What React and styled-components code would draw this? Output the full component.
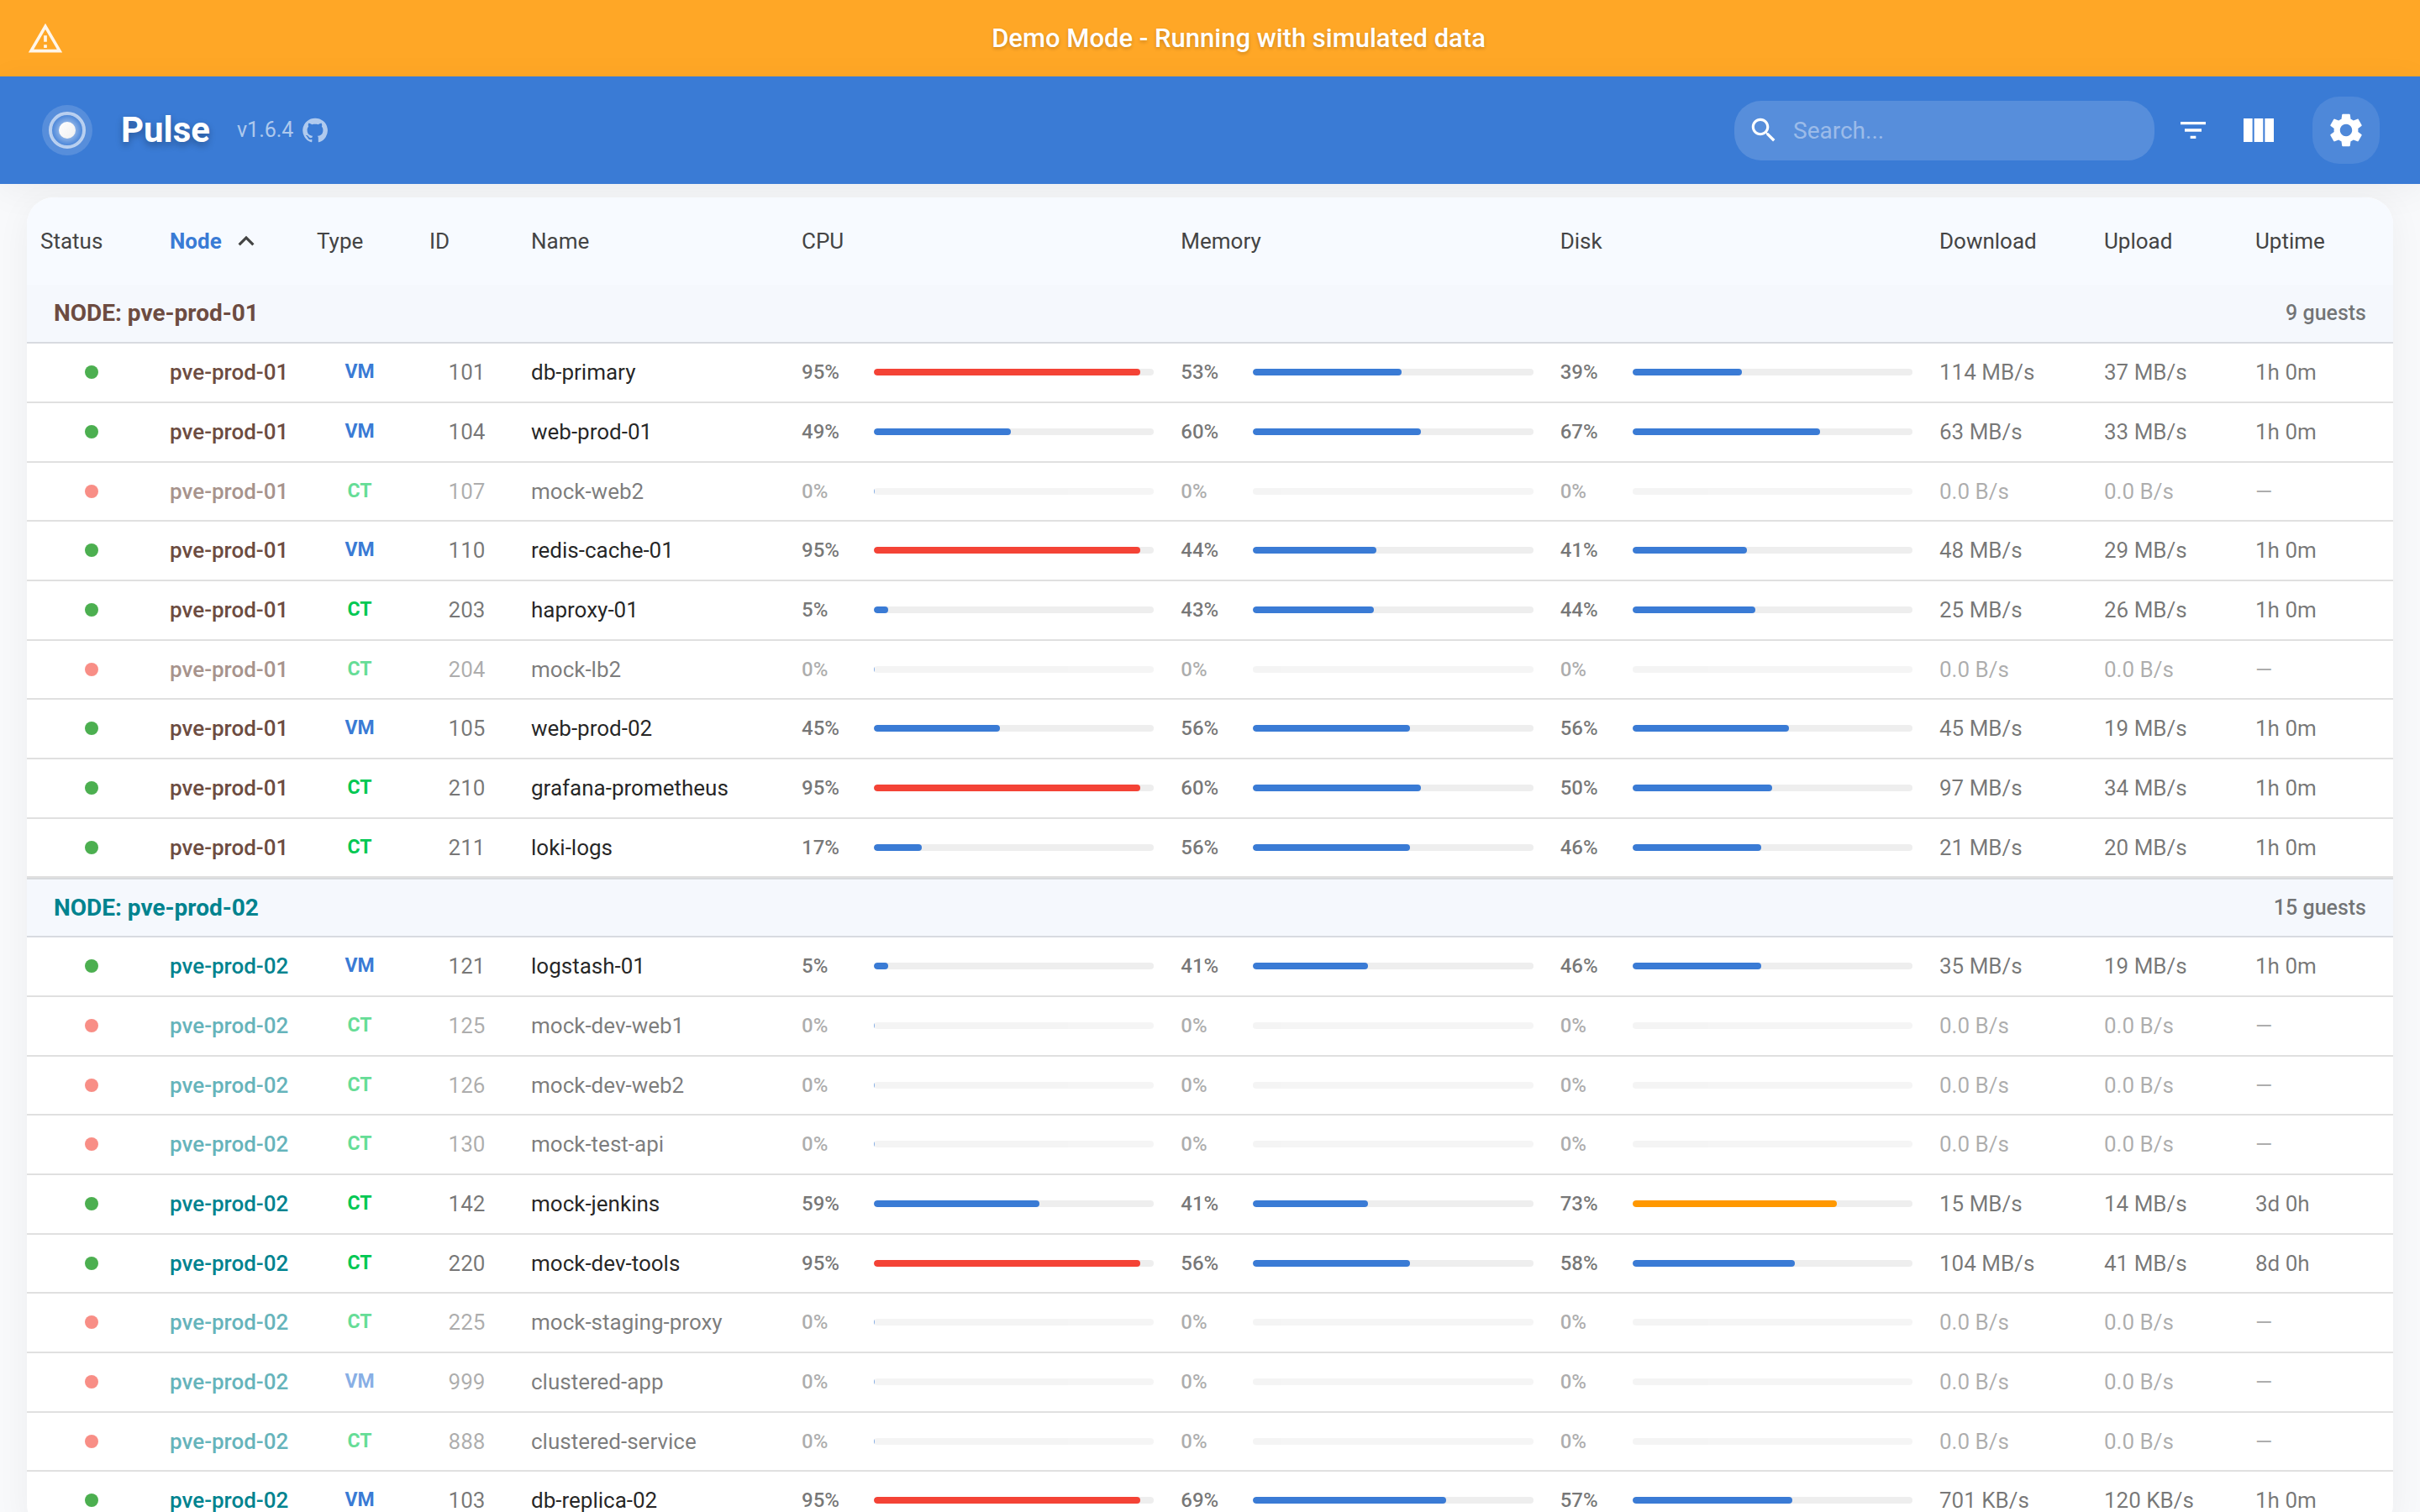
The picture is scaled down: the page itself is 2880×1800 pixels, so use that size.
import React, { useState } from "react";
import styled, { createGlobalStyle } from "styled-components";

const BLUE = "#3a7bd5";
const RED = "#f44336";
const ORANGE = "#ff9800";

const nodeColors = {
  "pve-prod-01": "#6d4c41",
  "pve-prod-02": "#00838f",
};

const columns = [
  { label: "Status", width: 154 },
  { label: "Node", width: 175, sorted: true },
  { label: "Type", width: 134 },
  { label: "ID", width: 121 },
  { label: "Name", width: 322 },
  { label: "CPU" },
  { label: "Memory" },
  { label: "Disk" },
  { label: "Download", width: 196 },
  { label: "Upload", width: 180 },
  { label: "Uptime", width: 180 },
];

const off = (type, id, name) => ({
  type, id, name, offline: true,
  cpu: 0, mem: 0, disk: 0, down: "0.0 B/s", up: "0.0 B/s", uptime: "—",
});
const on = (type, id, name, cpu, mem, disk, down, up, uptime = "1h 0m") => ({
  type, id, name, cpu, mem, disk, down, up, uptime,
});

const groups = [
  {
    node: "pve-prod-01",
    total: 9,
    guests: [
      on("VM", 101, "db-primary", 95, 53, 39, "114 MB/s", "37 MB/s"),
      on("VM", 104, "web-prod-01", 49, 60, 67, "63 MB/s", "33 MB/s"),
      off("CT", 107, "mock-web2"),
      on("VM", 110, "redis-cache-01", 95, 44, 41, "48 MB/s", "29 MB/s"),
      on("CT", 203, "haproxy-01", 5, 43, 44, "25 MB/s", "26 MB/s"),
      off("CT", 204, "mock-lb2"),
      on("VM", 105, "web-prod-02", 45, 56, 56, "45 MB/s", "19 MB/s"),
      on("CT", 210, "grafana-prometheus", 95, 60, 50, "97 MB/s", "34 MB/s"),
      on("CT", 211, "loki-logs", 17, 56, 46, "21 MB/s", "20 MB/s"),
    ],
  },
  {
    node: "pve-prod-02",
    total: 15,
    guests: [
      on("VM", 121, "logstash-01", 5, 41, 46, "35 MB/s", "19 MB/s"),
      off("CT", 125, "mock-dev-web1"),
      off("CT", 126, "mock-dev-web2"),
      off("CT", 130, "mock-test-api"),
      on("CT", 142, "mock-jenkins", 59, 41, 73, "15 MB/s", "14 MB/s", "3d 0h"),
      on("CT", 220, "mock-dev-tools", 95, 56, 58, "104 MB/s", "41 MB/s", "8d 0h"),
      off("CT", 225, "mock-staging-proxy"),
      off("VM", 999, "clustered-app"),
      off("CT", 888, "clustered-service"),
      on("VM", 103, "db-replica-02", 95, 69, 57, "701 KB/s", "120 KB/s"),
    ],
  },
];

const Global = createGlobalStyle`
  * { box-sizing: border-box; }
  html, body, #root { height: 100%; }
  body {
    margin: 0;
    background: #f8f9fb;
    color: rgba(0, 0, 0, 0.87);
    font-family: Roboto, "Liberation Sans", sans-serif;
    font-size: 26px;
    line-height: 28px;
  }
  button, input { font: inherit; color: inherit; }
`;

const Page = styled.div`
  height: 100%;
  display: flex;
  flex-direction: column;
`;

const Banner = styled.div`
  flex: none;
  display: flex;
  align-items: center;
  gap: 24px;
  padding: 24px 32px 23px;
  background: #ffa726;
  color: #fff;
`;

const BannerText = styled.p`
  flex: 1;
  margin: 0;
  text-align: center;
  font-size: 31px;
  font-weight: 500;
  line-height: 44px;
  text-shadow: 0 2px 4px rgba(0, 0, 0, 0.2);
`;

const TopBar = styled.header`
  position: relative;
  flex: none;
  display: flex;
  align-items: center;
  justify-content: space-between;
  padding: 24px 48px;
  background: ${BLUE};
  color: #fff;
  box-shadow: 0 8px 40px rgba(0, 0, 0, 0.05);
`;

const Brand = styled.div`
  display: flex;
  align-items: center;
  gap: 32px;
`;

const Title = styled.h1`
  margin: 0;
  font-size: 42px;
  font-weight: 700;
  line-height: 56px;
  text-shadow: 0 4px 8px rgba(0, 0, 0, 0.3);
`;

const VersionLink = styled.a`
  display: flex;
  align-items: center;
  gap: 10px;
  color: rgba(255, 255, 255, 0.6);
  font-size: 25px;
  text-decoration: none;
`;

const Tools = styled.div`
  display: flex;
  align-items: center;
  gap: 16px;
`;

const SearchBox = styled.label`
  display: flex;
  align-items: center;
  gap: 16px;
  width: 500px;
  height: 71px;
  padding: 0 16px;
  border-radius: 32px;
  background: rgba(255, 255, 255, 0.15);
`;

const SearchInput = styled.input`
  flex: 1;
  min-width: 0;
  height: 48px;
  padding: 0;
  border: 0;
  outline: 0;
  background: none;
  font-size: 28px;
  &::placeholder { color: rgba(255, 255, 255, 0.42); opacity: 1; }
`;

const IconButton = styled.button`
  display: grid;
  place-items: center;
  width: ${(p) => p.$size}px;
  height: ${(p) => p.$size}px;
  margin: 0;
  margin-left: ${(p) => (p.$filled ? 16 : 0)}px;
  padding: 0;
  border: 0;
  border-radius: 32px;
  background: ${(p) => (p.$filled ? "rgba(255, 255, 255, 0.1)" : "none")};
  color: #fff;
  cursor: pointer;
`;

const Svg = styled.svg`
  display: block;
  flex: none;
  width: ${(p) => p.$size}px;
  height: ${(p) => p.$size}px;
  fill: currentColor;
  opacity: ${(p) => p.$opacity ?? 1};
`;

const Content = styled.main`
  position: relative;
  z-index: 1;
  flex: 1;
  min-height: 0;
  padding: 16px 32px 0;
  overflow-y: auto;
  scrollbar-width: none;
`;

const Card = styled.section`
  overflow: hidden;
  border-radius: 32px;
  background: #fff;
  box-shadow: 0 8px 40px rgba(0, 0, 0, 0.05);
`;

const Table = styled.table`
  width: 100%;
  table-layout: fixed;
  border-collapse: separate;
  border-spacing: 0;
`;

const Col = styled.col`
  width: ${(p) => (p.$width ? `${p.$width}px` : "auto")};
`;

const HeadCell = styled.th`
  height: 104px;
  padding: 0 16px;
  background: #f7faff;
  color: ${(p) => (p.$sorted ? BLUE : "#444")};
  font-weight: ${(p) => (p.$sorted ? 700 : 400)};
  text-align: left;
  white-space: nowrap;
`;

const SortButton = styled.button`
  display: flex;
  align-items: center;
  gap: 10px;
  padding: 0;
  border: 0;
  background: none;
  cursor: pointer;
  svg { color: #444; }
`;

const GroupCell = styled.th`
  height: ${(p) => (p.$first ? 70 : 71)}px;
  padding: 0 32px;
  border-top: ${(p) => (p.$first ? "0" : "2px solid #d8dadd")};
  border-bottom: 2px solid #d8dbe0;
  background: #f5f8fd;
`;

const GroupBar = styled.div`
  display: flex;
  align-items: center;
  justify-content: space-between;
  color: ${(p) => p.$color};
  font-size: 28px;
  font-weight: 700;
`;

const GuestCount = styled.span`
  color: rgba(0, 0, 0, 0.54);
  font-size: 25px;
  font-weight: 500;
`;

const Row = styled.tr`
  height: 71px;
  &:nth-child(3n + 1) { height: 70px; }
`;

const Cell = styled.td`
  padding: 0 16px 1px;
  border-bottom: 2px solid #e0e0e0;
  color: ${(p) => p.$color || "rgba(0, 0, 0, 0.54)"};
  font-weight: ${(p) => p.$weight || 400};
  font-size: ${(p) => (p.$small ? 23 : 26)}px;
  text-align: ${(p) => (p.$center ? "center" : "left")};
  white-space: nowrap;
`;

const Fade = styled.div`
  opacity: ${(p) => (p.$offline ? 0.6 : 1)};
`;

const Dot = styled.span`
  display: block;
  width: 16px;
  height: 16px;
  margin: 0 auto;
  border-radius: 50%;
  background: ${(p) => (p.$offline ? RED : "#4caf50")};
`;

const Meter = styled.div`
  display: grid;
  grid-template-columns: 70px 1fr;
  column-gap: 16px;
  align-items: center;
`;

const Percent = styled.span`
  color: rgba(0, 0, 0, 0.54);
  font-size: 24px;
  font-weight: 500;
`;

const Track = styled.div`
  height: 8px;
  border-radius: 4px;
  overflow: hidden;
  background: #eee;
`;

const Fill = styled.div`
  height: 100%;
  min-width: ${(p) => (p.$live ? 1 : 0)}px;
  border-radius: 4px;
  background: ${(p) => (p.$value >= 90 ? RED : p.$value >= 70 ? ORANGE : BLUE)};
`;

const paths = {
  warning: "M12 5.99 19.53 19H4.47L12 5.99M12 2 1 21h22L12 2zm1 14h-2v2h2v-2zm0-6h-2v4h2v-4z",
  search: "M15.5 14h-.79l-.28-.27C15.41 12.59 16 11.11 16 9.5 16 5.91 13.09 3 9.5 3S3 5.91 3 9.5 5.91 16 9.5 16c1.61 0 3.09-.59 4.23-1.57l.27.28v.79l5 4.99L20.49 19l-4.99-5zm-6 0C7.01 14 5 11.99 5 9.5S7.01 5 9.5 5 14 7.01 14 9.5 11.99 14 9.5 14z",
  filter: "M10 18h4v-2h-4v2zM3 6v2h18V6H3zm3 7h12v-2H6v2z",
  columns: "M14.67 5v14H9.33V5h5.34zm1 14H21V5h-5.33v14zm-7.34 0V5H3v14h5.33z",
  settings: "M19.14 12.94c.04-.3.06-.61.06-.94 0-.32-.02-.64-.07-.94l2.03-1.58c.18-.14.23-.41.12-.61l-1.92-3.32c-.12-.22-.37-.29-.59-.22l-2.39.96c-.5-.38-1.03-.7-1.62-.94l-.36-2.54c-.04-.24-.24-.41-.48-.41h-3.84c-.24 0-.43.17-.47.41l-.36 2.54c-.59.24-1.13.57-1.62.94l-2.39-.96c-.22-.08-.47 0-.59.22L2.74 8.87c-.12.21-.08.47.12.61l2.03 1.58c-.05.3-.09.63-.09.94s.02.64.07.94l-2.03 1.58c-.18.14-.23.41-.12.61l1.92 3.32c.12.22.37.29.59.22l2.39-.96c.5.38 1.03.7 1.62.94l.36 2.54c.05.24.24.41.48.41h3.84c.24 0 .44-.17.47-.41l.36-2.54c.59-.24 1.13-.56 1.62-.94l2.39.96c.22.08.47 0 .59-.22l1.92-3.32c.12-.22.07-.47-.12-.61l-2.01-1.58zM12 15.6c-1.98 0-3.6-1.62-3.6-3.6s1.62-3.6 3.6-3.6 3.6 1.62 3.6 3.6-1.62 3.6-3.6 3.6z",
  up: "M7.41 15.41 12 10.83l4.59 4.58L18 14l-6-6-6 6z",
  github: "M12 1.27a11 11 0 00-3.48 21.46c.55.09.73-.28.73-.55v-1.84c-3.03.64-3.67-1.46-3.67-1.46-.55-1.29-1.28-1.65-1.28-1.65-.92-.65.1-.65.1-.65 1.1 0 1.73 1.1 1.73 1.1.92 1.65 2.57 1.2 3.21.92a2 2 0 01.64-1.47c-2.47-.27-5.04-1.19-5.04-5.5 0-1.1.46-2.1 1.2-2.84a3.76 3.76 0 010-2.93s.91-.28 3.11 1.1c1.8-.49 3.7-.49 5.5 0 2.1-1.38 3.02-1.1 3.02-1.1a3.76 3.76 0 01.1 2.93c.83.74 1.2 1.74 1.2 2.94 0 4.21-2.57 5.13-5.04 5.4.45.37.82.92.82 2.02v3.03c0 .27.1.64.73.55A11 11 0 0012 1.27",
};

const Icon = ({ name, size, opacity }) => (
  <Svg viewBox="0 0 24 24" $size={size} $opacity={opacity} aria-hidden="true">
    <path d={paths[name]} />
  </Svg>
);

const Logo = () => (
  <Svg viewBox="0 0 64 64" $size={64} aria-hidden="true">
    <defs>
      <radialGradient id="glow">
        <stop offset="0.45" stopColor="#fff" stopOpacity="0.4" />
        <stop offset="1" stopColor="#fff" stopOpacity="0" />
      </radialGradient>
      <linearGradient id="core" x1="0" y1="0" x2="1" y2="1">
        <stop offset="0" stopColor="#fff" />
        <stop offset="1" stopColor="#f0f0f0" />
      </linearGradient>
    </defs>
    <circle cx="32" cy="32" r="30" fill="#fff" fillOpacity="0.15" />
    <circle cx="32" cy="32" r="20" fill={BLUE} fillOpacity="0.6" />
    <circle cx="32" cy="32" r="19" fill="url(#glow)" />
    <circle cx="32" cy="32" r="20" fill="none" stroke="#fff" strokeOpacity="0.6" strokeWidth="4" />
    <circle cx="32" cy="32" r="10" fill="url(#core)" />
  </Svg>
);

const Usage = ({ value, label, live }) => (
  <Meter>
    <Percent>{value}%</Percent>
    <Track role="progressbar" aria-label={label} aria-valuenow={value} aria-valuemin={0} aria-valuemax={100}>
      <Fill $value={value} $live={live} style={{ width: `${value}%` }} />
    </Track>
  </Meter>
);

const GuestCell = ({ offline, children, ...rest }) => (
  <Cell {...rest}>
    <Fade $offline={offline}>{children}</Fade>
  </Cell>
);

const GuestRow = ({ guest, node }) => {
  const offline = guest.offline;
  return (
    <Row>
      <GuestCell offline={offline}><Dot $offline={offline} /></GuestCell>
      <GuestCell offline={offline} $color={nodeColors[node]} $weight={500}>{node}</GuestCell>
      <GuestCell offline={offline} $color={guest.type === "VM" ? BLUE : "#00c853"} $weight={700} $small $center>{guest.type}</GuestCell>
      <GuestCell offline={offline} $center>{guest.id}</GuestCell>
      <GuestCell offline={offline} $color="rgba(0, 0, 0, 0.87)">{guest.name}</GuestCell>
      <GuestCell offline={offline}><Usage value={guest.cpu} label="CPU" live /></GuestCell>
      <GuestCell offline={offline}><Usage value={guest.mem} label="Memory" /></GuestCell>
      <GuestCell offline={offline}><Usage value={guest.disk} label="Disk" /></GuestCell>
      <GuestCell offline={offline}>{guest.down}</GuestCell>
      <GuestCell offline={offline}>{guest.up}</GuestCell>
      <GuestCell offline={offline}>{guest.uptime}</GuestCell>
    </Row>
  );
};

export default function App() {
  const [query, setQuery] = useState("");
  return (
    <>
      <Global />
      <Page>
        <Banner role="status">
          <Icon name="warning" size={44} opacity={0.9} />
          <BannerText>Demo Mode - Running with simulated data</BannerText>
        </Banner>
        <TopBar>
          <Brand>
            <Logo />
            <Title>Pulse</Title>
            <VersionLink href="#">
              v1.6.4
              <Icon name="github" size={32} />
            </VersionLink>
          </Brand>
          <Tools>
            <SearchBox>
              <Icon name="search" size={38} />
              <SearchInput
                type="text"
                aria-label="Search"
                placeholder="Search..."
                value={query}
                onChange={(e) => setQuery(e.target.value)}
              />
            </SearchBox>
            <IconButton $size={60} aria-label="Filters"><Icon name="filter" size={40} /></IconButton>
            <IconButton $size={64} aria-label="Columns"><Icon name="columns" size={48} /></IconButton>
            <IconButton $size={80} $filled aria-label="Settings"><Icon name="settings" size={48} /></IconButton>
          </Tools>
        </TopBar>
        <Content>
          <Card>
            <Table>
              <colgroup>
                {columns.map((c) => <Col key={c.label} $width={c.width} />)}
              </colgroup>
              <thead>
                <tr>
                  {columns.map((c) => (
                    <HeadCell key={c.label} scope="col" $sorted={c.sorted}>
                      {c.sorted ? (
                        <SortButton>{c.label}<Icon name="up" size={38} /></SortButton>
                      ) : c.label}
                    </HeadCell>
                  ))}
                </tr>
              </thead>
              {groups.map((g, i) => (
                <tbody key={g.node}>
                  <tr>
                    <GroupCell colSpan={columns.length} scope="rowgroup" $first={i === 0}>
                      <GroupBar $color={nodeColors[g.node]}>
                        NODE: {g.node}
                        <GuestCount>{g.total} guests</GuestCount>
                      </GroupBar>
                    </GroupCell>
                  </tr>
                  {g.guests.map((guest) => <GuestRow key={guest.id} guest={guest} node={g.node} />)}
                </tbody>
              ))}
            </Table>
          </Card>
        </Content>
      </Page>
    </>
  );
}
